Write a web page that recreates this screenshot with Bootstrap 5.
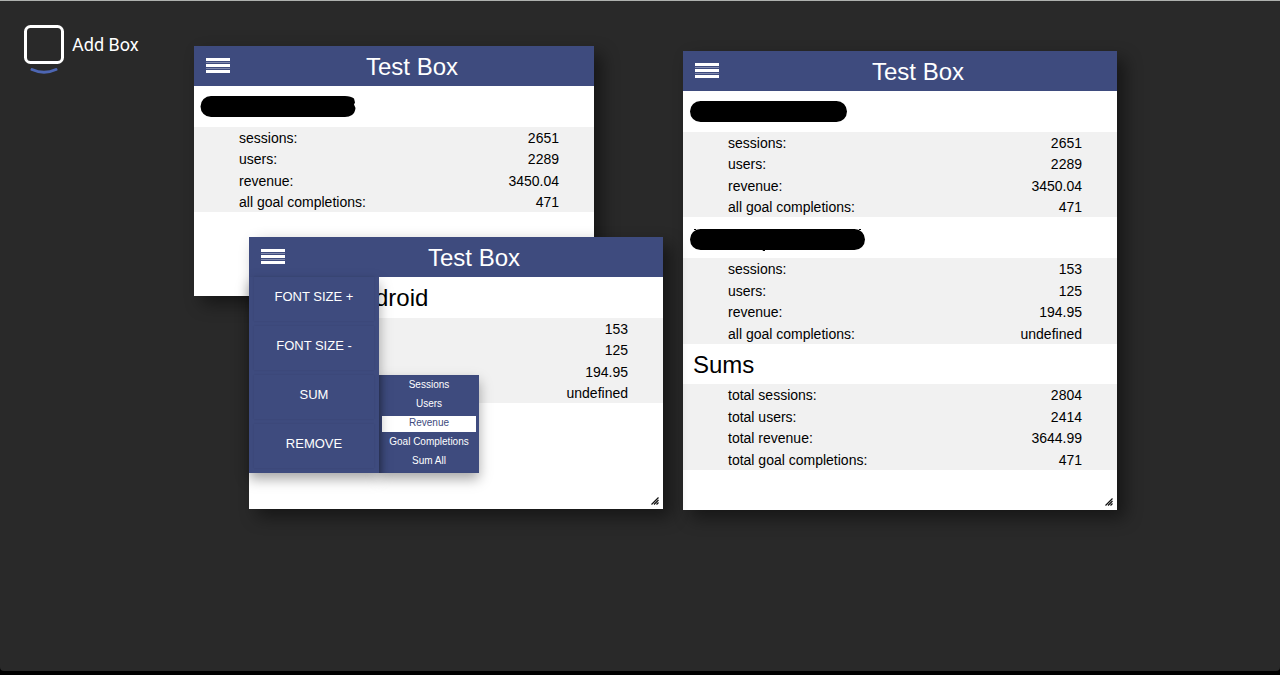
<!DOCTYPE html>
<html lang="en">
<head>
<meta charset="utf-8">
<meta name="viewport" content="width=device-width, initial-scale=1">
<title>Test Box</title>
<link href="https://cdn.jsdelivr.net/npm/bootstrap@5.3.0/dist/css/bootstrap.min.css" rel="stylesheet">
<style>
  :root { --blue: #3e4b7e; --desk: #292929; }
  body { background: #000; font-family: "Liberation Sans", Arial, sans-serif; color: #000; font-size: 14px; }
  .desk { background: var(--desk); border-top: 1px solid #aeb1ae; border-radius: 0 0 4px 4px; margin-bottom: 4px; }
  .add-box { font-family: Roboto, sans-serif; font-size: 18px; line-height: 24px; margin: 24px 0 0 24px; gap: 8px; }
  .add-box svg { display: block; }

  .win { background: #fff; box-shadow: 8px 8px 16px rgba(0,0,0,.45); }
  .win-1 { left: 194px; top: 45px; width: 400px; height: 250px; }
  .win-2 { left: 249px; top: 236px; width: 414px; height: 272px; }
  .win-3 { left: 683px; top: 50px; width: 434px; height: 459px; }
  .win-head { background: var(--blue); color: #fff; height: 40px; padding: 0 12px; }
  .win-head h2 { font-size: 24px; line-height: 38px; padding: 2px 0 0 12px; }
  .burger { background: none; border: 0; padding: 0; line-height: 0; }
  .group { height: 41px; line-height: 41px; font-size: 24px; padding-left: 10px; }
  .group-cut { padding-left: 126px; }
  .redacted { padding-left: 7px; padding-top: 9px; line-height: 0; }
  .win-1 .redacted { padding-left: 6px; }
  .stats { width: 100%; height: 85px; background: #f1f1f1; line-height: 19px; }
  .stats th { font-weight: 400; padding: 2px 0 0 45px; }
  .stats td { text-align: right; padding: 2px 35px 0 0; }
  .stats-tall { height: 86px; }
  .group-sum { height: 40px; }
  .grip { right: 4px; bottom: 4px; }

  .win-menu { left: 0; top: 40px; width: 130px; padding: 0 5px 5px; gap: 5px; background: var(--blue); box-shadow: 0 6px 12px rgba(0,0,0,.35); }
  .win-menu > button { height: 44px; padding: 0 0 4px; border: 0; background: var(--blue); color: #fff; font-size: 13px; box-shadow: 0 0 2px rgba(0,0,0,.09); }
  .sub-menu { left: 130px; top: 138px; width: 100px; padding: 3px; gap: 3px; background: var(--blue); box-shadow: 0 6px 12px rgba(0,0,0,.35), inset 6px 0 6px -4px rgba(0,0,0,.25); }
  .sub-menu button { height: 16px; line-height: 14px; padding: 0 0 2px; border: 0; background: transparent; color: #fff; font-size: 10px; }
  .sub-menu button.on { background: #fff; color: var(--blue); }
</style>
</head>
<body class="min-vh-100 d-flex flex-column">
<svg class="d-none" aria-hidden="true">
  <symbol id="bars" viewBox="0 0 24 16">
    <path fill="#fff" d="M0 0h24v3H0zM0 6h24v3H0zM0 12h24v3H0z"/>
    <path fill="#8089ac" d="M0 4h24v1H0zM0 10h24v1H0z"/>
  </symbol>
  <symbol id="grip" viewBox="0 0 8 8">
    <path stroke="#111" stroke-width="1.200" fill="none" d="M.5 7.500 7.500.5M3 7.500 7.500 3M5.500 7.500l2-2"/>
  </symbol>
</svg>

<main class="desk position-relative flex-grow-1">
  <button type="button" class="add-box btn p-0 border-0 text-white d-inline-flex align-items-start">
    <svg width="40" height="50" viewBox="0 0 40 50" fill="none" aria-hidden="true">
      <rect x="1.500" y="1.500" width="37" height="36" rx="5" stroke="#fff" stroke-width="3"/>
      <path d="M8 44.500Q20 50 32 44.500" stroke="#4d66b3" stroke-width="3" stroke-linecap="round"/>
    </svg>
    <span class="pt-2">Add Box</span>
  </button>

  <section class="win win-1 position-absolute">
    <header class="win-head d-flex align-items-center">
      <button type="button" class="burger" aria-label="Menu"><svg width="24" height="16"><use href="#bars"/></svg></button>
      <h2 class="flex-grow-1 text-center m-0 fw-normal">Test Box</h2>
    </header>
    <div class="group redacted">
      <svg width="156" height="23" viewBox="0 0 156 23" aria-hidden="true"><path d="M11 1H145Q151 1 154 3.500L155 7.500L154 9.500L155.500 13Q155 18 152 20Q149 22 145 22H11A10.500 10.500 0 0 1 11 1Z"/></svg>
    </div>
    <table class="stats">
      <tr><th scope="row">sessions:</th><td>2651</td></tr>
      <tr><th scope="row">users:</th><td>2289</td></tr>
      <tr><th scope="row">revenue:</th><td>3450.04</td></tr>
      <tr><th scope="row">all goal completions:</th><td>471</td></tr>
    </table>
  </section>

  <section class="win win-3 position-absolute">
    <header class="win-head d-flex align-items-center">
      <button type="button" class="burger" aria-label="Menu"><svg width="24" height="16"><use href="#bars"/></svg></button>
      <h2 class="flex-grow-1 text-center m-0 fw-normal">Test Box</h2>
    </header>
    <div class="group redacted">
      <svg width="157" height="23" viewBox="0 0 157 23" aria-hidden="true"><rect y="1" width="157" height="21" rx="10.500"/></svg>
    </div>
    <table class="stats">
      <tr><th scope="row">sessions:</th><td>2651</td></tr>
      <tr><th scope="row">users:</th><td>2289</td></tr>
      <tr><th scope="row">revenue:</th><td>3450.04</td></tr>
      <tr><th scope="row">all goal completions:</th><td>471</td></tr>
    </table>
    <div class="group redacted">
      <svg width="175" height="26" viewBox="0 0 175 26" aria-hidden="true"><rect y="3" width="175" height="21" rx="10.500"/><path d="M4 3h2v1H4zM169 3h2v1h-2zM72 23h3v2h-2z"/></svg>
    </div>
    <table class="stats stats-tall">
      <tr><th scope="row">sessions:</th><td>153</td></tr>
      <tr><th scope="row">users:</th><td>125</td></tr>
      <tr><th scope="row">revenue:</th><td>194.95</td></tr>
      <tr><th scope="row">all goal completions:</th><td>undefined</td></tr>
    </table>
    <div class="group group-sum">Sums</div>
    <table class="stats stats-tall">
      <tr><th scope="row">total sessions:</th><td>2804</td></tr>
      <tr><th scope="row">total users:</th><td>2414</td></tr>
      <tr><th scope="row">total revenue:</th><td>3644.99</td></tr>
      <tr><th scope="row">total goal completions:</th><td>471</td></tr>
    </table>
    <svg class="grip position-absolute" width="8" height="8" aria-hidden="true"><use href="#grip"/></svg>
  </section>

  <section class="win win-2 position-absolute">
    <header class="win-head d-flex align-items-center">
      <button type="button" class="burger" aria-label="Menu" aria-expanded="true"><svg width="24" height="16"><use href="#bars"/></svg></button>
      <h2 class="flex-grow-1 text-center m-0 fw-normal">Test Box</h2>
    </header>
    <div class="group group-cut">droid</div>
    <table class="stats">
      <tr><td>153</td></tr>
      <tr><td>125</td></tr>
      <tr><td>194.95</td></tr>
      <tr><td>undefined</td></tr>
    </table>
    <div class="sub-menu position-absolute d-flex flex-column">
      <button type="button">Sessions</button>
      <button type="button">Users</button>
      <button type="button" class="on">Revenue</button>
      <button type="button">Goal Completions</button>
      <button type="button">Sum All</button>
    </div>
    <div class="win-menu position-absolute d-flex flex-column">
      <button type="button">FONT SIZE +</button>
      <button type="button">FONT SIZE -</button>
      <button type="button">SUM</button>
      <button type="button">REMOVE</button>
    </div>
    <svg class="grip position-absolute" width="8" height="8" aria-hidden="true"><use href="#grip"/></svg>
  </section>
</main>
<script src="https://cdn.jsdelivr.net/npm/bootstrap@5.3.0/dist/js/bootstrap.bundle.min.js"></script>
</body>
</html>
